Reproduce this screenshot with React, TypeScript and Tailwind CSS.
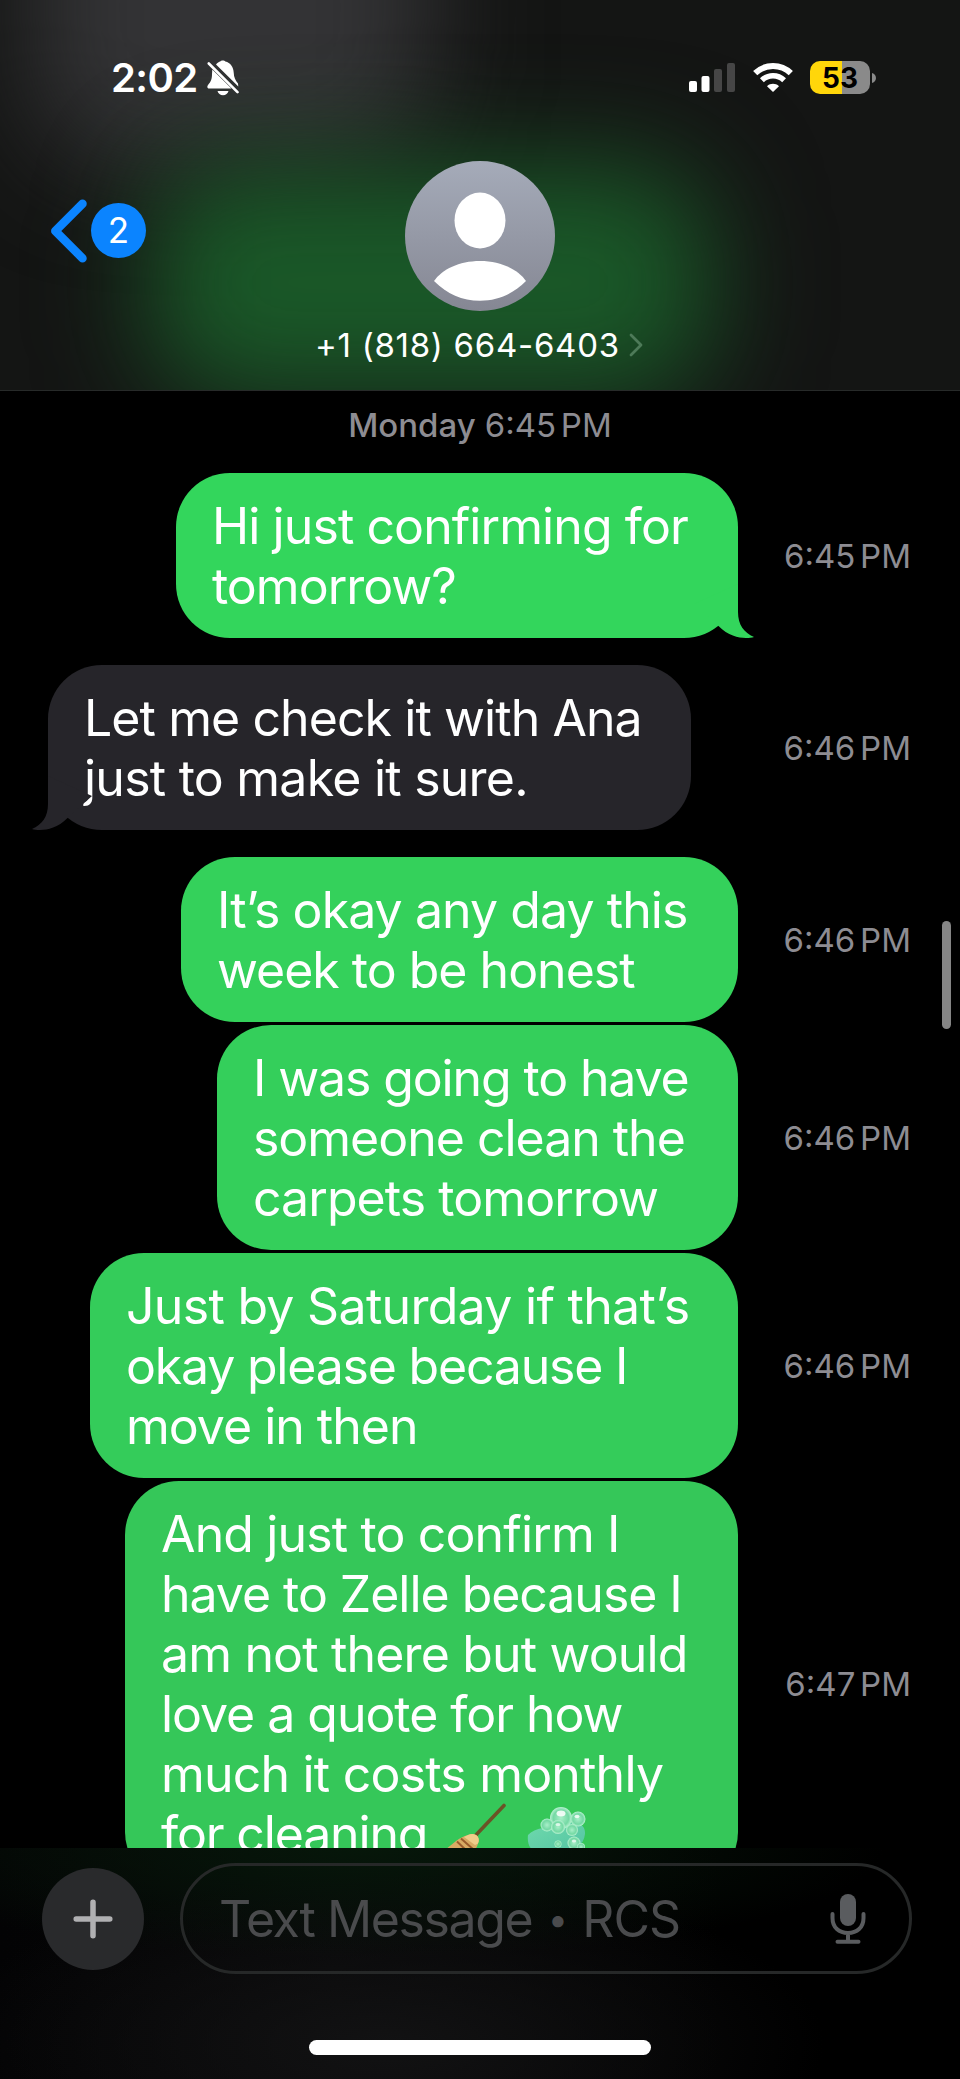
import React from 'react';
import clsx from 'clsx';

type Line = { text: string; tracking: string };

type Message = {
    lines: Line[];
    time: string;
    mine: boolean;
    tail?: boolean;
    box: string;
};

const messages: Message[] = [
    {
        lines: [
            { text: 'Hi just confirming for', tracking: 'tracking-[-0.92px]' },
            { text: 'tomorrow?', tracking: 'tracking-[-1px]' },
        ],
        time: '6:45 PM',
        mine: true,
        tail: true,
        box: 'ml-[176px] w-[562px] mb-[27px] bg-[#33d65c]',
    },
    {
        lines: [
            { text: 'Let me check it with Ana', tracking: 'tracking-[-0.92px]' },
            { text: 'just to make it sure.', tracking: 'tracking-[-0.76px]' },
        ],
        time: '6:46 PM',
        mine: false,
        tail: true,
        box: 'ml-[48px] w-[643px] mb-[27px] bg-[#26252a]',
    },
    {
        lines: [
            { text: 'It’s okay any day this', tracking: 'tracking-[-0.92px]' },
            { text: 'week to be honest', tracking: 'tracking-[-1px]' },
        ],
        time: '6:46 PM',
        mine: true,
        box: 'ml-[181px] w-[557px] mb-[3px] bg-[#34d15b]',
    },
    {
        lines: [
            { text: 'I was going to have', tracking: 'tracking-[-1.13px]' },
            { text: 'someone clean the', tracking: 'tracking-[-1.02px]' },
            { text: 'carpets tomorrow', tracking: 'tracking-[-0.94px]' },
        ],
        time: '6:46 PM',
        mine: true,
        box: 'ml-[217px] w-[521px] mb-[3px] bg-[#34cf5b]',
    },
    {
        lines: [
            { text: 'Just by Saturday if that’s', tracking: 'tracking-[-0.7px]' },
            { text: 'okay please because I', tracking: 'tracking-[-1.2px]' },
            { text: 'move in then', tracking: 'tracking-[-1px]' },
        ],
        time: '6:46 PM',
        mine: true,
        box: 'ml-[90px] w-[648px] mb-[3px] bg-[#34cc5a]',
    },
    {
        lines: [
            { text: 'And just to confirm I', tracking: 'tracking-[-0.86px]' },
            { text: 'have to Zelle because I', tracking: 'tracking-[-1.04px]' },
            { text: 'am not there but would', tracking: 'tracking-[-0.84px]' },
            { text: 'love a quote for how', tracking: 'tracking-[-1.04px]' },
            { text: 'much it costs monthly', tracking: 'tracking-[-0.8px]' },
            { text: 'for cleaning', tracking: 'tracking-[-1.15px]' },
        ],
        time: '6:47 PM',
        mine: true,
        box: 'ml-[125px] w-[613px] bg-[#35c759]',
    },
];

function BellSlash() {
    return (
        <svg className="w-[32px] h-[36px]" viewBox="0 0 32 36" fill="none">
            <path fill="#fff" d="M9 4.500C10.500 2.600 12 1.900 13.300 1.500C14 .3 17.500 .3 18.300 1.500C23.500 2.800 26.500 7 26.700 12.500C26.900 17.500 28.500 20.500 31 23.500L31.300 26.500Z" />
            <path fill="#fff" d="M5.300 9.500L24.500 28.600H2.200C.2 28.600 -.2 26.500 1 25C3.800 21.800 5 19.500 5 14Z" />
            <path fill="#fff" d="M10.500 31H21.500C20.800 33.700 18.800 35.200 16 35.200S11.200 33.700 10.500 31Z" />
            <path stroke="#fff" strokeWidth="2.600" strokeLinecap="round" d="M1.800 3.500L30.500 32.200" />
        </svg>
    );
}

function Signal() {
    return (
        <svg className="w-[46px] h-[29px]" viewBox="0 0 46 29">
            <rect x="0" y="18" width="8" height="11" rx="2" fill="#fff" />
            <rect x="12.500" y="13" width="8" height="16" rx="2" fill="#fff" />
            <rect x="25" y="6" width="8" height="23" rx="2" fill="#464646" />
            <rect x="38" y="0" width="8" height="29" rx="2" fill="#464646" />
        </svg>
    );
}

function Wifi() {
    return (
        <svg className="w-[40px] h-[29px]" viewBox="0 0 40 29" fill="none">
            <path stroke="#fff" strokeWidth="6" d="M2.200 10.200C12.200 .6 27.800 .6 37.800 10.200" />
            <path stroke="#fff" strokeWidth="5.600" d="M8.900 17.200C15.200 11.300 24.800 11.300 31.100 17.200" />
            <path fill="#fff" d="M14 23.200C17.500 20 22.500 20 26 23.200L20 29Z" />
        </svg>
    );
}

function Battery() {
    return (
        <div className="flex items-center gap-[2px]">
            <div className="flex h-[33px] w-[60px] items-center justify-center rounded-[10px] bg-[linear-gradient(90deg,#ffd60a_53%,#8a8a8a_53%)] text-[28px] leading-none font-bold text-black">
                53
            </div>
            <svg className="h-[10px] w-[4px]" viewBox="0 0 4 10">
                <path fill="#8a8a8a" d="M0 0C5.300 1.500 5.300 8.500 0 10Z" />
            </svg>
        </div>
    );
}

function Avatar() {
    return (
        <svg className="h-[150px] w-[150px]" viewBox="0 0 150 150">
            <defs>
                <linearGradient id="avatar" x1="0" y1="0" x2="0" y2="1">
                    <stop offset="0" stopColor="#a5abb9" />
                    <stop offset="1" stopColor="#858793" />
                </linearGradient>
            </defs>
            <circle cx="75" cy="75" r="75" fill="url(#avatar)" />
            <ellipse cx="75" cy="59.500" rx="25.500" ry="28" fill="#fff" />
            <path fill="#fff" d="M29 120C37 108.500 54 100 75 100S113 108.500 121 120C108 133 93 139.700 75 139.700S42 133 29 120Z" />
        </svg>
    );
}

function Header() {
    return (
        <header className="relative h-[391px] shrink-0 overflow-hidden border-b border-[#272a29] bg-[#141514]">
            <div className="absolute -top-[150px] left-[30px] h-[315px] w-[400px] rounded-[90px] bg-[#333335] blur-[55px]" />
            <div className="absolute top-[165px] left-[150px] h-[235px] w-[560px] rounded-[80px] bg-[#1a5828] blur-[55px]" />

            <div className="relative flex h-[100px] items-center pt-[55px] pr-[84px] pl-[111px]">
                <span className="text-[40px] leading-none font-semibold tracking-[-0.6px]">2:02</span>
                <span className="ml-[9px]"><BellSlash /></span>
                <div className="ml-auto flex items-center">
                    <Signal />
                    <span className="ml-[18px]"><Wifi /></span>
                    <span className="ml-[17px]"><Battery /></span>
                </div>
            </div>

            <div className="relative mt-[61px] grid h-[150px] grid-cols-3">
                <div className="flex items-center pb-[11px] pl-[49px]">
                    <svg className="h-[64px] w-[38px]" viewBox="0 0 38 64" fill="none">
                        <path stroke="#0b84ff" strokeWidth="8.500" strokeLinecap="round" strokeLinejoin="round" d="M33.500 4.800L6.300 32L33.500 59.200" />
                    </svg>
                    <span className="ml-[4px] flex h-[55px] w-[55px] items-center justify-center rounded-full bg-[#0b84ff] text-[35px] leading-none">2</span>
                </div>
                <div className="flex justify-center"><Avatar /></div>
            </div>

            <div className="relative mt-[14px] flex h-[40px] items-center pl-[315px]">
                <span className="text-[33px] leading-[40px] tracking-[0.72px] whitespace-nowrap">+1 (818) 664-6403</span>
                <svg className="ml-[9px] h-[24px] w-[14px]" viewBox="0 0 14 24" fill="none">
                    <path stroke="#4d7a58" strokeWidth="2.800" strokeLinecap="round" strokeLinejoin="round" d="M2 2L12 12L2 22" />
                </svg>
            </div>
        </header>
    );
}

function Tail({ mine }: { mine: boolean }) {
    return (
        <svg
            className={clsx('absolute bottom-0 h-[54px] w-[60px]', mine ? '-right-[16px] text-[#33d65c]' : '-left-[16px] -scale-x-100 text-[#26252a]')}
            viewBox="0 0 60 54"
        >
            <path fill="currentColor" d="M44 0V28C44 41 50 48.500 60 53C53 54.800 38 55.500 24.500 42L0 20Z" />
        </svg>
    );
}

function Broom() {
    return (
        <svg className="h-[62px] w-[62px]" viewBox="0 0 62 62">
            <path stroke="#6b5426" strokeWidth="3.600" strokeLinecap="round" d="M57 2.500L28 33" />
            <path fill="#d9ab63" d="M21 32C28 29 34 34 31 40.500C29 48 22 56 12 60L-1 46C5 42 12 34 21 32Z" />
            <path fill="#f0cd8a" d="M21 32C28 29 34 34 31 40.500L28 42L17 34Z" />
            <path stroke="#9a5c2c" strokeWidth="2" fill="none" d="M14 35.500L27 47M10 38.500L23 51" />
        </svg>
    );
}

function Soap() {
    return (
        <svg className="h-[62px] w-[60px]" viewBox="0 0 60 62">
            <defs>
                <radialGradient id="bubble" cx=".5" cy=".5" r=".5">
                    <stop offset="0" stopColor="#a9efc9" />
                    <stop offset=".7" stopColor="#74d9a4" />
                    <stop offset="1" stopColor="#b8f2d2" />
                </radialGradient>
                <linearGradient id="soap" x1="0" y1="0" x2="1" y2="1">
                    <stop offset="0" stopColor="#6fd9ac" />
                    <stop offset="1" stopColor="#52c3a2" />
                </linearGradient>
            </defs>
            <path fill="url(#soap)" d="M1 28C8 20 22 21 34 17C46 13 59 15 58 27C57 38 46 48 30 49C12 51 -1 44 1 28Z" />
            <circle cx="34" cy="11" r="11" fill="url(#bubble)" />
            <circle cx="51" cy="12" r="7.500" fill="url(#bubble)" />
            <circle cx="20" cy="18" r="6.500" fill="url(#bubble)" />
            <circle cx="31" cy="20" r="7" fill="url(#bubble)" />
            <circle cx="45" cy="23" r="6" fill="url(#bubble)" />
            <circle cx="47" cy="36" r="6.500" fill="url(#bubble)" />
            <circle cx="31" cy="37" r="3.500" fill="url(#bubble)" />
            <circle cx="54" cy="40" r="4" fill="url(#bubble)" />
            <ellipse cx="34" cy="6.500" rx="4.500" ry="3" fill="#fff" opacity=".85" />
            <ellipse cx="50" cy="9.500" rx="2.500" ry="1.800" fill="#fff" opacity=".8" />
            <ellipse cx="31" cy="17.500" rx="2.500" ry="1.600" fill="#fff" opacity=".7" />
            <ellipse cx="47" cy="34" rx="2.200" ry="1.600" fill="#fff" opacity=".7" />
        </svg>
    );
}

function Time({ value, className }: { value: string; className?: string }) {
    return (
        <span className={clsx('text-[33px] leading-[40px] whitespace-nowrap text-[#8d8c92] [word-spacing:-4.500px]', className)}>
            {value}
        </span>
    );
}

function Bubble({ message, last }: { message: Message; last: boolean }) {
    return (
        <div className="flex shrink-0">
            <div className={clsx('relative rounded-[54px] pt-[23px] pb-[22px] pl-[36px]', message.box)}>
                {message.lines.map((line) => (
                    <p key={line.text} className={clsx('h-[60px] text-[50px] leading-[60px] whitespace-nowrap', line.tracking)}>
                        {line.text}
                    </p>
                ))}
                {last && (
                    <div className="absolute top-[322px] left-[322px] flex gap-[18px]">
                        <Broom />
                        <span className="pt-[4px]"><Soap /></span>
                    </div>
                )}
                {message.tail && <Tail mine={message.mine} />}
            </div>
            <Time className={clsx('mr-[49px] ml-auto self-center', !last && (message.tail ? 'pb-[27px]' : 'pb-[3px]'))} value={message.time} />
        </div>
    );
}

function Composer() {
    return (
        <footer className="h-[231px] shrink-0 bg-[radial-gradient(ellipse_520px_110px_at_38%_0%,#06170a,transparent),radial-gradient(ellipse_440px_170px_at_40%_85%,#121213,transparent),linear-gradient(90deg,#030304,#070708_35%,#000_75%)]">
            <div className="flex pt-[15px] pl-[42px]">
                <div className="mt-[5px] flex h-[102px] w-[102px] items-center justify-center rounded-full bg-[#292a2c]">
                    <svg className="h-[40px] w-[40px]" viewBox="0 0 40 40">
                        <path stroke="#b0b0b2" strokeWidth="5.500" strokeLinecap="round" d="M20 3.200V36.800M3.200 20H36.800" />
                    </svg>
                </div>
                <div className="ml-[36px] flex h-[111px] w-[732px] items-center rounded-full border-[3px] border-[#262828] pr-[43px] pl-[36px]">
                    <span className="flex items-center text-[50px] leading-[60px] tracking-[-1.400px] whitespace-nowrap text-[#4a4b4d]">
                        Text Message
                        <span className="mx-[14px] w-[22px] text-center text-[36px]">•</span>
                        <span className="tracking-[-1px]">RCS</span>
                    </span>
                    <svg className="ml-auto h-[50px] w-[36px]" viewBox="0 0 36 50" fill="none">
                        <rect x="10" y="0" width="16" height="32" rx="8" fill="#5a5c5f" />
                        <path stroke="#5a5c5f" strokeWidth="4" strokeLinecap="round" d="M2.500 20V24C2.500 33.500 9 39 18 39S33.500 33.500 33.500 24V20M18 39V47M7.500 47.800H28.500" />
                    </svg>
                </div>
            </div>
            <div className="mx-auto mt-[66px] h-[15px] w-[342px] rounded-full bg-white" />
        </footer>
    );
}

export default function App() {
    return (
        <div className="relative flex h-[2079px] w-[960px] flex-col overflow-hidden bg-black font-['Inter',sans-serif] text-white">
            <Header />
            <main className="flex min-h-0 flex-1 flex-col overflow-hidden">
                <div className="mt-[14px] mb-[28px] flex shrink-0 justify-center gap-[9px] text-[33px] leading-[40px]">
                    <span className="font-medium text-[#8d8c92]">Monday</span>
                    <Time value="6:45 PM" />
                </div>
                {messages.map((message, i) => (
                    <Bubble key={i} message={message} last={i === messages.length - 1} />
                ))}
            </main>
            <Composer />
            <div className="absolute top-[921px] right-[9px] h-[108px] w-[9px] rounded-full bg-[#858585]" />
        </div>
    );
}
